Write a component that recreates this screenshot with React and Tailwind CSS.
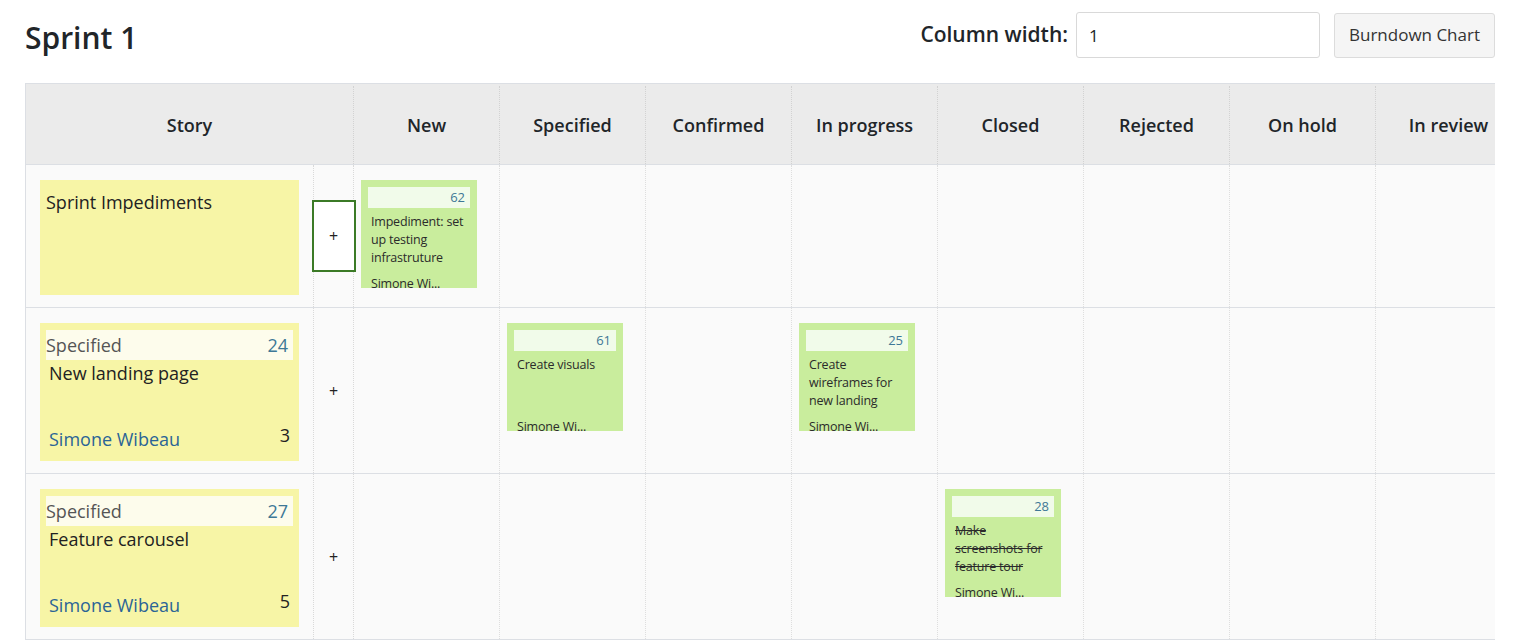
const COLUMNS = ['New', 'Specified', 'Confirmed', 'In progress', 'Closed', 'Rejected', 'On hold', 'In review'];

const ROWS = [
  {
    id: 'impediments',
    title: 'Sprint Impediments',
    impediment: true,
    height: 'h-[143px]',
    tasks: { New: { id: 62, title: 'Impediment: set up testing infrastruture', who: 'Simone Wi...' } },
  },
  {
    id: 24,
    status: 'Specified',
    title: 'New landing page',
    who: 'Simone Wibeau',
    points: 3,
    height: 'h-[166px]',
    tasks: {
      Specified: { id: 61, title: 'Create visuals', who: 'Simone Wi...' },
      'In progress': { id: 25, title: 'Create wireframes for new landing page', who: 'Simone Wi...' },
    },
  },
  {
    id: 27,
    status: 'Specified',
    title: 'Feature carousel',
    who: 'Simone Wibeau',
    points: 5,
    height: 'h-[166px]',
    tasks: {
      Closed: { id: 28, title: 'Make screenshots for feature tour', who: 'Simone Wi...', done: true },
    },
  },
];

function TaskCard({ task }) {
  return (
    <div className="w-[116px] h-[108px] overflow-hidden bg-[#c9ed9d] px-[7px] pt-[7px]">
      <div className="h-[21px] bg-[#f1fbea] pr-[5px] text-right text-[13px] leading-[21px] text-[#3e7896]">
        {task.id}
      </div>
      <div
        className={`mt-[5px] h-[54px] overflow-hidden px-[3px] text-[12.5px] leading-[18px] tracking-[-0.2px] text-[#2b2b2b] ${
          task.done ? 'line-through' : ''
        }`}
      >
        {task.title}
      </div>
      <div className="mt-[8px] px-[3px] text-[12.5px] leading-[18px] tracking-[-0.2px] text-[#2b2b2b] whitespace-nowrap">
        {task.who}
      </div>
    </div>
  );
}

function StoryCard({ row }) {
  if (row.impediment) {
    return (
      <div className="h-[115px] w-[259px] bg-[#f7f5a6] px-[6px] pt-[10px] text-[18px] leading-[24px] text-[#222]">
        {row.title}
      </div>
    );
  }
  return (
    <div className="flex h-[138px] w-[259px] flex-col bg-[#f7f5a6] px-[6px] pt-[7px] pb-[10px]">
      <div className="flex h-[30px] items-center justify-between bg-[#fdfcec] pr-[5px] text-[18px]">
        <span className="text-[#555]">{row.status}</span>
        <span className="text-[#3e7896]">{row.id}</span>
      </div>
      <div className="px-[3px] pt-[1px] text-[18px] leading-[24px] text-[#222]">{row.title}</div>
      <div className="mt-auto flex items-end justify-between px-[3px] text-[18px] leading-[24px]">
        <span className="text-[#2a6496]">{row.who}</span>
        <span className="text-[#222] -mt-[4px] self-start">{row.points}</span>
      </div>
    </div>
  );
}

export default function App() {
  return (
    <div className="min-h-[643px] bg-white font-['Segoe_UI','Open_Sans',sans-serif] text-[#212529]">
      <div className="flex items-center justify-between pl-[25px] pr-[23px] pt-[12px]">
        <h1 className="pt-[5px] text-[30px] font-semibold leading-[41px] text-[#212529]">Sprint 1</h1>
        <div className="flex items-center">
          <span className="text-[21px] font-semibold mr-[8px]">Column width:</span>
          <input
            defaultValue="1"
            className="h-[46px] w-[244px] rounded-[3px] border border-[#d9d9d9] bg-white px-[12px] text-[17px] outline-none"
          />
          <button className="ml-[14px] h-[45px] w-[161px] rounded-[3px] border border-[#dcdcdc] bg-[#f5f5f5] text-[17px] text-[#333]">
            Burndown Chart
          </button>
        </div>
      </div>

      <div className="ml-[25px] mt-[25px] w-[1470px] overflow-hidden">
        <div className="w-max">
          <div className="flex h-[82px] border-y border-l border-[#dcdfe4] bg-[#ebebeb] pt-[2px] text-[18px] font-semibold text-[#212529]">
            <div className="flex w-[328px] items-center justify-center border-r border-dotted border-[#d2d2d2]">Story</div>
            {COLUMNS.map((col) => (
              <div
                key={col}
                className="flex w-[146px] items-center justify-center border-r border-dotted border-[#d2d2d2]"
              >
                {col}
              </div>
            ))}
          </div>

          {ROWS.map((row) => (
            <div key={row.id} className={`flex ${row.height} border-b border-l border-[#dcdfe4] bg-[#fafafa]`}>
              <div className="w-[288px] border-r border-dotted border-[#d9d9d9] pl-[14px] pt-[15px]">
                <StoryCard row={row} />
              </div>
              <div className="flex w-[40px] items-center justify-center border-r border-dotted border-[#d9d9d9]">
                {row.impediment ? (
                  <button className="-mx-[2px] flex h-[72px] w-[44px] shrink-0 items-center justify-center border-2 border-[#3b7a26] bg-white text-[16px] text-[#222]">
                    +
                  </button>
                ) : (
                  <span className="text-[16px] text-[#222]">+</span>
                )}
              </div>
              {COLUMNS.map((col) => (
                <div key={col} className="w-[146px] border-r border-dotted border-[#dedede] pl-[7px] pt-[15px]">
                  {row.tasks[col] && <TaskCard task={row.tasks[col]} />}
                </div>
              ))}
            </div>
          ))}
        </div>
      </div>
    </div>
  );
}
